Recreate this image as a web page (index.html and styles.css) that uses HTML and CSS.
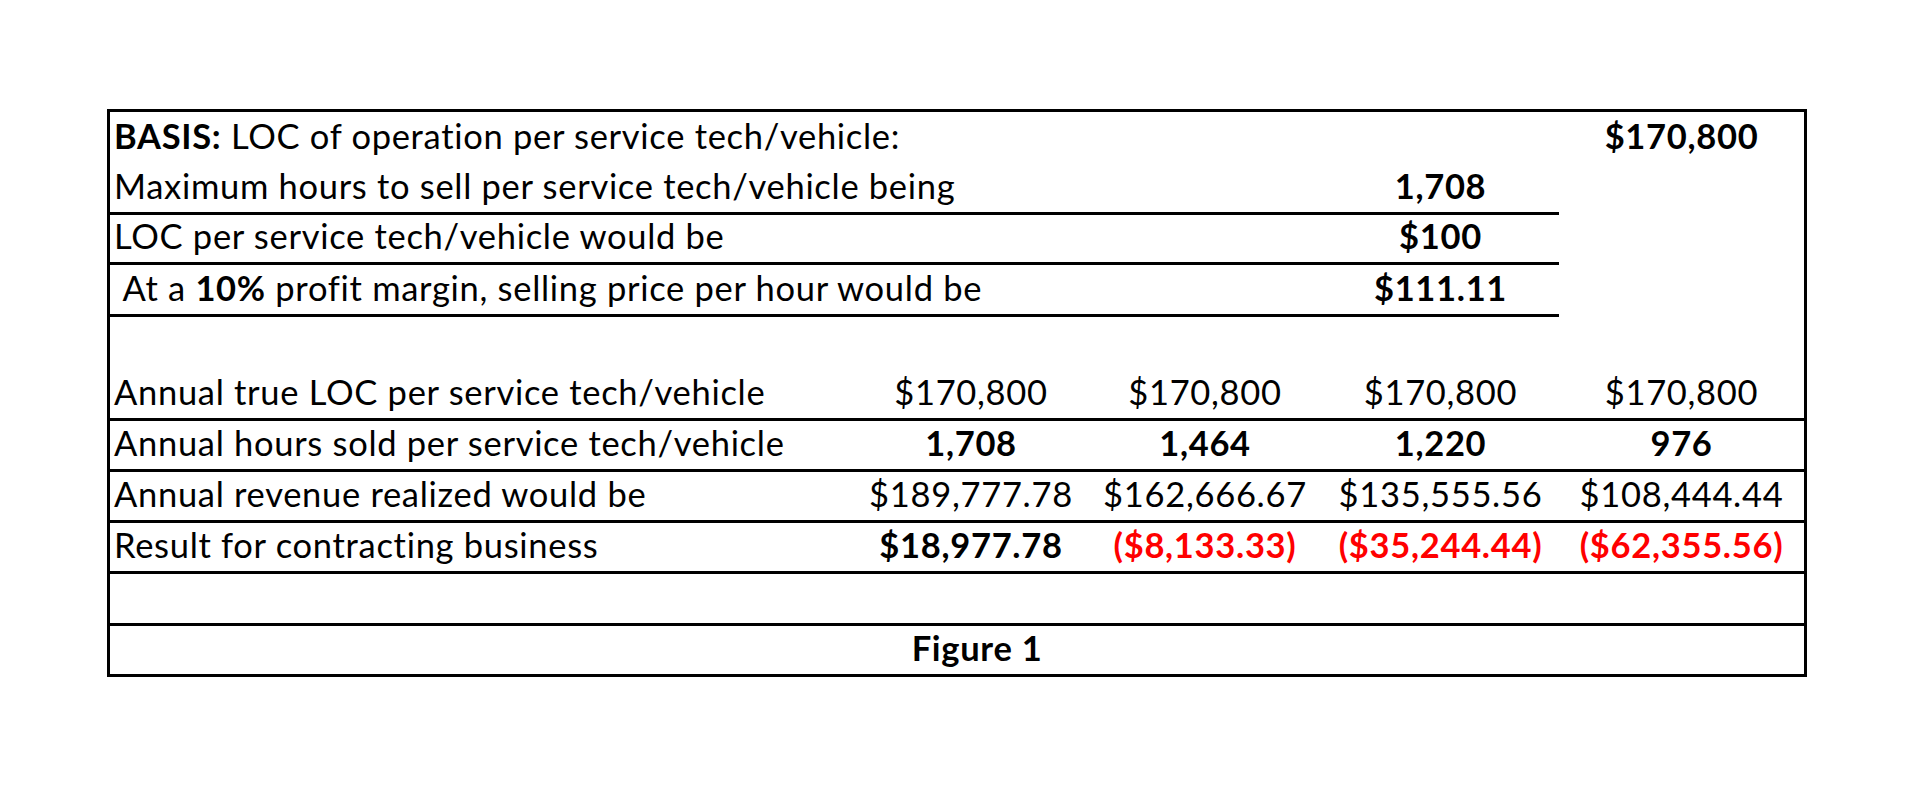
FILE: index.html
```html
<!DOCTYPE html>
<html lang="en">
<head>
<meta charset="utf-8">
<title>Figure 1</title>
<link rel="stylesheet" href="styles.css">
</head>
<body>
<div class="sheet">
  <div class="row r1">
    <div class="cell label span4"><span><b>BASIS:</b> LOC of operation per service tech/vehicle:</span></div>
    <div class="cell num bold"><span>$170,800</span></div>
  </div>
  <div class="row r2">
    <div class="cell label span3 rule"><span>Maximum hours to sell per service tech/vehicle being</span></div>
    <div class="cell num bold rule"><span>1,708</span></div>
    <div class="cell"></div>
  </div>
  <div class="row r3">
    <div class="cell label span3 rule"><span>LOC per service tech/vehicle would be</span></div>
    <div class="cell num bold rule"><span>$100</span></div>
    <div class="cell"></div>
  </div>
  <div class="row r4">
    <div class="cell label span3 rule"><span>&nbsp;At a <b>10%</b> profit margin, selling price per hour would be</span></div>
    <div class="cell num bold rule"><span>$111.11</span></div>
    <div class="cell"></div>
  </div>
  <div class="row r5"></div>
  <div class="row r6 full">
    <div class="cell label"><span>Annual true LOC per service tech/vehicle</span></div>
    <div class="cell num"><span>$170,800</span></div>
    <div class="cell num"><span>$170,800</span></div>
    <div class="cell num"><span>$170,800</span></div>
    <div class="cell num"><span>$170,800</span></div>
  </div>
  <div class="row r7 full">
    <div class="cell label"><span>Annual hours sold per service tech/vehicle</span></div>
    <div class="cell num bold"><span>1,708</span></div>
    <div class="cell num bold"><span>1,464</span></div>
    <div class="cell num bold"><span>1,220</span></div>
    <div class="cell num bold"><span>976</span></div>
  </div>
  <div class="row r8 full">
    <div class="cell label"><span>Annual revenue realized would be</span></div>
    <div class="cell num"><span>$189,777.78</span></div>
    <div class="cell num"><span>$162,666.67</span></div>
    <div class="cell num"><span>$135,555.56</span></div>
    <div class="cell num"><span>$108,444.44</span></div>
  </div>
  <div class="row r9 full">
    <div class="cell label"><span>Result for contracting business</span></div>
    <div class="cell num bold"><span>$18,977.78</span></div>
    <div class="cell num bold neg"><span>($8,133.33)</span></div>
    <div class="cell num bold neg"><span>($35,244.44)</span></div>
    <div class="cell num bold neg"><span>($62,355.56)</span></div>
  </div>
  <div class="row r10 full"></div>
  <div class="row r11">
    <div class="cell"></div>
    <div class="cell num bold caption"><span>Figure 1</span></div>
  </div>
</div>
</body>
</html>
```
FILE: styles.css
```css
* {
  box-sizing: border-box;
}

html, body {
  margin: 0;
  padding: 0;
  background: #ffffff;
}

body {
  font-family: "Lato", "Liberation Sans", sans-serif;
  font-size: 34.5px;
  letter-spacing: 0.7px;
  color: #000000;
}

.sheet {
  margin: 109px 0 0 107px;
  width: 1700px;
  border: 3px solid #000000;
}

.row {
  display: grid;
  grid-template-columns: 744px 234px 234px 237px 245px;
}

.r1 { height: 50px; }
.r2 { height: 53px; }
.r3 { height: 50px; }
.r4 { height: 52px; }
.r5 { height: 50px; }
.r6 { height: 54px; }
.r7 { height: 51px; }
.r8 { height: 51px; }
.r9 { height: 51px; }
.r10 { height: 52px; }
.r11 { height: 48px; }

.full {
  border-bottom: 3px solid #000000;
}

.cell {
  display: flex;
  align-items: flex-end;
  padding-bottom: 6px;
  line-height: 40px;
  white-space: nowrap;
  min-width: 0;
}

.label {
  padding-left: 4px;
}

.span4 { grid-column: span 4; }
.span3 { grid-column: span 3; }

.rule {
  border-bottom: 3px solid #000000;
}

.num {
  justify-content: center;
  overflow: visible;
}

.caption {
  padding-left: 12px;
}

.bold, b {
  font-weight: 700;
}

.neg {
  color: #ff0000;
}
```
